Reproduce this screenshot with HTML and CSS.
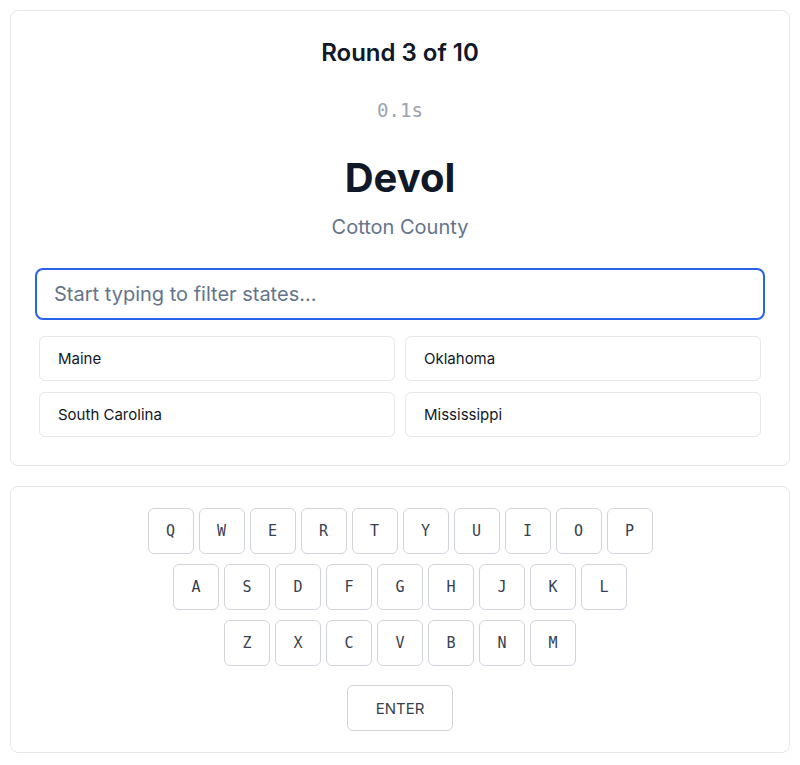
FILE: index.html
```html
<!DOCTYPE html>
<html>
<head>
<meta charset="utf-8">
<link rel="stylesheet" href="styles.css">
</head>
<body>
<div class="page">
  <section class="card game">
    <h2 class="round">Round 3 of 10</h2>
    <div class="timer">0.1s</div>
    <h1 class="place">Devol</h1>
    <div class="county">Cotton County</div>
    <input class="search" type="text" placeholder="Start typing to filter states..." autofocus>
    <div class="options">
      <button class="option">Maine</button>
      <button class="option">Oklahoma</button>
      <button class="option">South Carolina</button>
      <button class="option">Mississippi</button>
    </div>
  </section>
  <section class="card keyboard">
    <div class="krow">
      <button class="key">Q</button><button class="key">W</button><button class="key">E</button><button class="key">R</button><button class="key">T</button><button class="key">Y</button><button class="key">U</button><button class="key">I</button><button class="key">O</button><button class="key">P</button>
    </div>
    <div class="krow">
      <button class="key">A</button><button class="key">S</button><button class="key">D</button><button class="key">F</button><button class="key">G</button><button class="key">H</button><button class="key">J</button><button class="key">K</button><button class="key">L</button>
    </div>
    <div class="krow">
      <button class="key">Z</button><button class="key">X</button><button class="key">C</button><button class="key">V</button><button class="key">B</button><button class="key">N</button><button class="key">M</button>
    </div>
    <div class="krow enter-row">
      <button class="key enter">ENTER</button>
    </div>
  </section>
</div>
</body>
</html>
```

FILE: styles.css
```css
* { box-sizing: border-box; }
html, body { margin: 0; padding: 0; background: #ffffff; }
body {
  font-family: Inter, "Liberation Sans", sans-serif;
  color: #111827;
}
.page {
  padding: 10px;
  display: flex;
  flex-direction: column;
  gap: 20px;
}
.card {
  background: #fff;
  border: 1px solid #e5e7eb;
  border-radius: 8px;
}
.game {
  padding: 24px 24px 24px;
  display: flex;
  flex-direction: column;
  align-items: center;
}
.round {
  margin: 0;
  font-size: 24px;
  line-height: 36px;
  font-weight: 600;
  color: #111827;
}
.timer {
  margin-top: 25px;
  font-family: "DejaVu Sans Mono", "Liberation Mono", monospace;
  font-size: 19px;
  line-height: 28px;
  color: #9ca3af;
}
.place {
  margin: 30px 0 0;
  font-size: 40px;
  line-height: 48px;
  font-weight: 700;
  color: #111827;
}
.county {
  margin-top: 11px;
  font-size: 20px;
  line-height: 28px;
  color: #64748b;
}
.search {
  margin-top: 27px;
  width: 100%;
  height: 52px;
  border: 2px solid #2563eb;
  border-radius: 8px;
  padding: 0 17px;
  font-family: Inter, "Liberation Sans", sans-serif;
  font-size: 20px;
  color: #111827;
  outline: none;
}
.search::placeholder { color: #64748b; }
.options {
  margin-top: 16px;
  width: 100%;
  padding: 0 4px 4px;
  display: grid;
  grid-template-columns: 1fr 1fr;
  grid-auto-rows: 45px;
  gap: 11px 10px;
}
.option {
  height: 45px;
  background: #fff;
  border: 1px solid #e5e7eb;
  border-radius: 6px;
  padding: 0 18px;
  text-align: left;
  font-family: Inter, "Liberation Sans", sans-serif;
  font-size: 15px;
  color: #111827;
}
.keyboard {
  padding: 21px 0;
  display: flex;
  flex-direction: column;
  align-items: center;
  gap: 10px;
}
.krow {
  display: flex;
  justify-content: center;
  gap: 5px;
}
.enter-row { margin-top: 9px; }
.key {
  width: 46px;
  height: 46px;
  background: #fff;
  border: 1px solid #d1d5db;
  border-radius: 6px;
  padding: 0;
  font-family: "DejaVu Sans Mono", "Liberation Mono", monospace;
  font-size: 15px;
  color: #374151;
}
.key.enter {
  width: 106px;
  font-family: Inter, "Liberation Sans", sans-serif;
  font-size: 15px;
}
```
